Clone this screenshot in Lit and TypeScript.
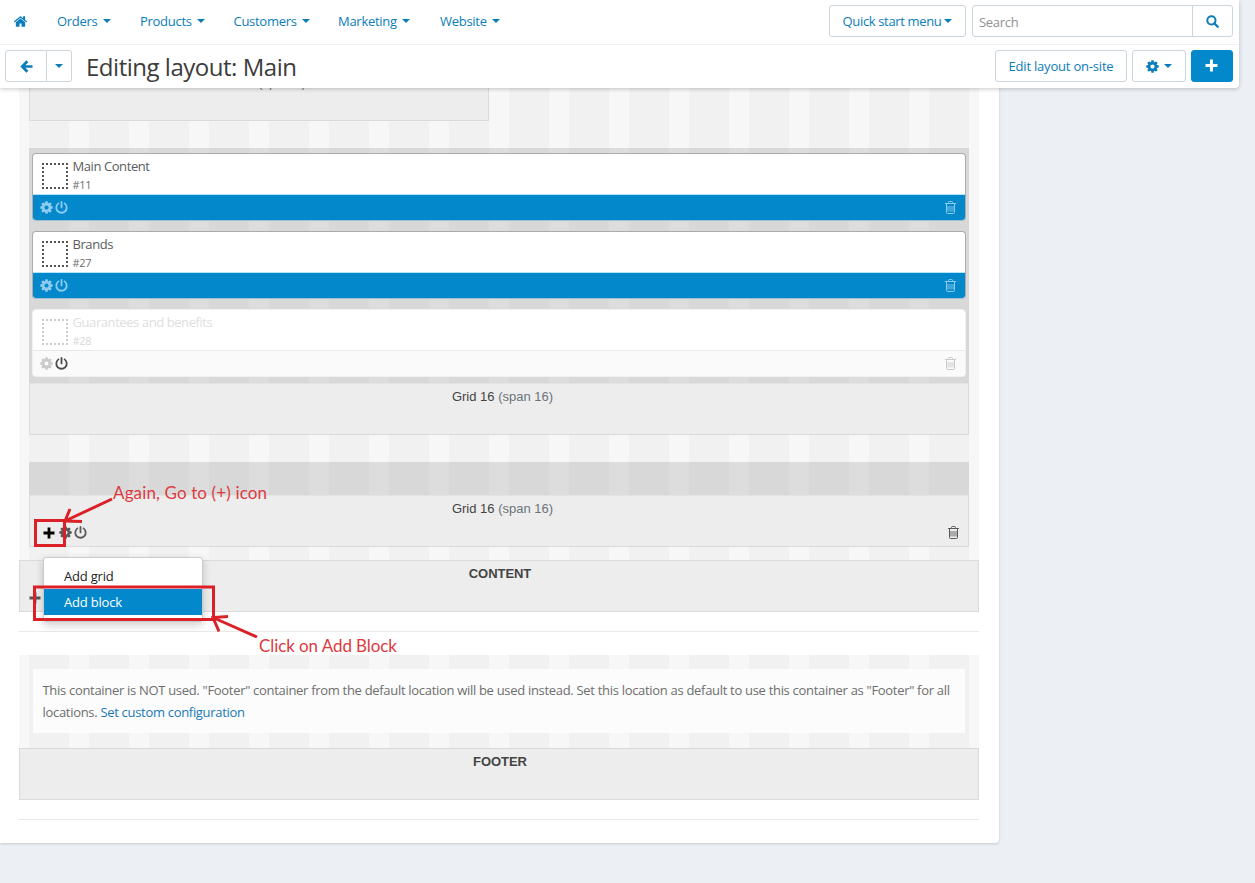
import { LitElement, html, svg, css } from "lit";
import { customElement, property } from "lit/decorators.js";

const ICONS: Record<string, string> = {
  home: "M1472 992v480q0 26-19 45t-45 19h-384v-384h-256v384h-384q-26 0-45-19t-19-45v-480q0-1 .5-3t.5-3l575-474 575 474q1 2 1 6zm223-69l-62 74q-8 9-21 11h-3q-13 0-21-7l-692-577-692 577q-12 8-24 7-13-2-21-11l-62-74q-8-10-7-23.5t11-21.5l719-599q32-26 76-26t76 26l244 204v-195q0-14 9-23t23-9h192q14 0 23 9t9 23v408l219 182q10 8 11 21.5t-7 23.5z",
  cog: "M1152 896q0-106-75-181t-181-75-181 75-75 181 75 181 181 75 181-75 75-181zm512-109v222q0 12-8 23t-20 13l-185 28q-19 54-39 91 35 50 107 138 10 12 10 25t-9 23q-27 37-99 108t-94 71q-12 0-26-9l-138-108q-44 23-91 38-16 136-29 186-7 28-36 28h-222q-14 0-24.5-8.5t-11.5-21.5l-28-184q-49-16-90-37l-141 107q-10 9-25 9-14 0-25-11-126-114-165-168-7-10-7-23 0-12 8-23 15-21 51-66.5t54-70.5q-27-50-41-99l-183-27q-13-2-21-12.5t-8-23.5v-222q0-12 8-23t19-13l186-28q14-46 39-92-40-57-107-138-10-12-10-24 0-10 9-23 26-36 98.5-107.5t94.5-71.5q13 0 26 10l138 107q44-23 91-38 16-136 29-186 7-28 36-28h222q14 0 24.5 8.5t11.5 21.5l28 184q49 16 90 37l142-107q9-9 24-9 13 0 25 10 129 119 165 170 7 8 7 22 0 12-8 23-15 21-51 66.5t-54 70.5q26 50 41 98l183 28q13 2 21 12.5t8 23.5z",
};

@customElement("ui-icon")
export class UiIcon extends LitElement {
  @property() name = "";
  static styles = css`
    :host { display: inline-flex; flex: none; width: 13px; height: 13px; }
    svg { width: 100%; height: 100%; display: block; }
  `;
  render() {
    switch (this.name) {
      case "power":
        return html`<svg viewBox="0 0 13 13" fill="none" stroke="currentColor" stroke-width="1.8" stroke-linecap="round"><path d="M3.4 2.4A5.2 5.2 0 1 0 9.6 2.4M6.5 .9v5.5"/></svg>`;
      case "plus":
        return html`<svg viewBox="0 0 12 12" fill="currentColor"><path d="M4.6.5h2.8v4.1h4.1v2.8H7.4v4.1H4.6V7.4H.5V4.6h4.1z"/></svg>`;
      case "arrow":
        return html`<svg viewBox="0 0 13 13" fill="none" stroke="currentColor" stroke-width="2.7"><path d="M7.4 1.2 2.2 6.5l5.2 5.3M2.5 6.5h10"/></svg>`;
      case "search":
        return html`<svg viewBox="0 0 13 13" fill="none" stroke="currentColor" stroke-width="2"><circle cx="5.4" cy="5.4" r="4.1"/><path d="m8.3 8.3 3.4 3.4" stroke-linecap="round" stroke-width="2.3"/></svg>`;
      case "trash":
        return html`<svg viewBox="0 0 13 13" fill="none" stroke="currentColor" stroke-width="1"><path d="M1 2.5h11M4.5 2.5v-1q0-1 1-1h2q1 0 1 1v1M2.5 3v8.5q0 1 1 1h6q1 0 1-1V3"/><path fill="currentColor" stroke="none" opacity=".45" d="M3 5h7v5.5H3z"/></svg>`;
      default:
        return html`<svg viewBox="90 90 1612 1612" fill="currentColor">${svg`<path d=${ICONS[this.name] ?? ""} />`}</svg>`;
    }
  }
}

@customElement("layout-block")
export class LayoutBlock extends LitElement {
  @property() heading = "";
  @property() code = "";
  @property({ type: Boolean, reflect: true }) disabled = false;
  static styles = css`
    :host { display: block; box-sizing: border-box; height: 68px; border: 1px solid #ababab; border-bottom-color: #9fbfd2; border-radius: 4px; background: #fff; overflow: hidden; font: 13px/18px "Open Sans", sans-serif; color: #5c5c5c; }
    .head { display: flex; height: 40px; padding: 0 0 0 9px; gap: 4.5px; border-bottom: 1px solid #b5e4fa; }
    .box { width: 26px; height: 26px; margin-top: 9px; color: #555; }
    .text { display: flex; flex-direction: column; padding-top: 3px; letter-spacing: -0.42px; }
    .code { font-size: 11px; line-height: 19px; letter-spacing: -0.3px; color: #6c6c6c; }
    .tools { display: flex; align-items: center; gap: 2px; height: 25px; padding: 0 8px 1px 7px; box-sizing: border-box; background: #0388cc; color: #8fcdf0; }
    .bin { margin-left: auto; }
    :host([disabled]) { border-color: #f0f0f0; color: #dedede; }
    :host([disabled]) .code { color: #d8d8d8; }
    :host([disabled]) .head { border-color: #e9e9e9; }
    :host([disabled]) .tools { background: #fafafa; color: #cacaca; }
    :host([disabled]) .power { color: #4c4c4c; }
    :host([disabled]) .box { color: #ccc; }
  `;
  render() {
    return html`
      <div class="head">
        <svg class="box" viewBox="0 0 26 26"><path d="M0 1h26M0 25h26M1 4v20M25 4v20" fill="none" stroke="currentColor" stroke-width="2" stroke-dasharray="2 2"/></svg>
        <div class="text"><span>${this.heading}</span><span class="code">${this.code}</span></div>
      </div>
      <div class="tools"><ui-icon name="cog"></ui-icon><ui-icon class="power" name="power"></ui-icon><ui-icon class="bin" name="trash"></ui-icon></div>
    `;
  }
}

@customElement("app-root")
export class AppRoot extends LitElement {
  static styles = css`
    :host { display: block; position: relative; box-sizing: border-box; width: 1255px; height: 883px; overflow: hidden; background: #ecf0f4; font: 13px/20px "Open Sans", sans-serif; color: #0b7dba; }
    * { box-sizing: border-box; }
    .top { position: relative; z-index: 2; width: 1239px; height: 88px; background: #fff; border-radius: 0 0 4px 0; box-shadow: 0 1px 4px rgba(0,0,0,.22); }
    .nav { display: flex; align-items: flex-start; height: 45px; border-bottom: 1px solid #f0f0f0; padding: 5px 6px 0 14px; }
    .home { margin: 10px 30px 0 0; }
    .link { display: flex; align-items: center; gap: 5px; height: 32px; letter-spacing: -0.28px; }
    .l1 { width: 83px; } .l2 { width: 93.5px; } .l3 { width: 104.5px; } .l4 { width: 102px; }
    .caret { width: 0; height: 0; border: 4px solid transparent; border-top-color: currentColor; border-bottom: 0; flex: none; }
    .btn { display: flex; align-items: center; justify-content: center; height: 32px; border: 1px solid #ccd5db; border-radius: 3px; background: #fff; white-space: nowrap; letter-spacing: -0.2px; }
    .quick { width: 137px; margin-left: auto; gap: 3px; letter-spacing: -0.35px; }
    .search { display: flex; width: 261px; height: 32px; margin-left: 6px; border: 1px solid #ccd5db; border-radius: 3px; }
    .field { flex: 1; padding: 6px 6px 0; color: #909090; letter-spacing: -0.3px; }
    .go { display: flex; align-items: center; justify-content: center; width: 40px; border-left: 1px solid #ccd5db; }
    .bar { display: flex; height: 43px; padding: 5px 6px 0 5px; }
    .back { width: 42px; border-radius: 3px 0 0 3px; }
    .more { width: 26px; margin-left: -1px; border-radius: 0 3px 3px 0; }
    h1 { margin: 1px auto 0 14px; font-size: 24px; line-height: 32px; font-weight: 400; color: #3c3c3c; letter-spacing: -0.48px; }
    .site { width: 132px; }
    .gear { width: 54px; margin-left: 5px; gap: 5px; }
    .add { width: 42px; margin-left: 5px; padding: 0 1px 1px 0; background: #0388cc; border-color: #0388cc; color: #fff; }
    .panel { width: 999px; height: 775px; margin-top: -20px; padding: 0 20px 0 19px; background: #fff; border-radius: 0 0 4px 0; box-shadow: 0 1px 3px rgba(0,0,0,.16); }
    .stripes { padding: 1px 10px 13px; background: repeating-linear-gradient(90deg, #f1f1f1 0 40px, #f7f7f7 40px 60px) 10px 0 / 940px 100% no-repeat #f7f7f7; }
    .tools { height: 52px; background: #ededed; border: 1px solid #dadada; padding-left: 7px; text-align: center; font: 13px/26px "Liberation Sans", sans-serif; color: #444; }
    .muted { color: #6b747b; }
    .grid .tools { border-top-color: #e4e4e4; }
    .half { width: 460px; margin-bottom: 27px; }
    .blocks { display: flex; flex-direction: column; gap: 10px; padding: 5px 3px 6px; background: rgba(0,0,0,.1); }
    .empty { height: 33px; background: rgba(0,0,0,.1); margin-top: 27px; }
    .actions { display: flex; align-items: center; gap: 2px; padding: 4px 8px 0 0; color: #5a5a5a; }
    .actions .plus { width: 12px; height: 12px; color: #000; margin: 0 2px 0 6px; }
    .bin { margin-left: auto; }
    .tools.wide { font-weight: 700; padding-left: 2px; letter-spacing: -0.05px; }
    .rule { height: 1px; background: #e9e9e9; margin: 19px 0 23px; }
    .foot { padding: 14px 14px 15px 14px; }
    .note { height: 64px; padding: 10px 9.5px; background: #fcfcfc; color: #6e6e6e; line-height: 22px; white-space: nowrap; letter-spacing: -0.306px; }
    .note a { color: #1878b8; }
    .ghost { position: absolute; left: 29px; top: 592px; color: #555; width: 12px; height: 12px; z-index: 2; }
    .menu { position: absolute; z-index: 3; left: 43px; top: 557px; width: 160px; height: 65px; padding-top: 6px; background: #fff; border: 1px solid #ccc; border-radius: 3px; box-shadow: 0 3px 8px rgba(0,0,0,.2); color: #222; }
    .item { height: 26px; line-height: 25px; padding-left: 20px; letter-spacing: -0.2px; }
    .item.on { margin-top: -1px; height: 26px; line-height: 27px; background: #0388cc; color: #fff; }
    .marks { position: absolute; z-index: 4; left: 0; top: 0; font: 17px Lato, sans-serif; }
  `;

  private link(label: string, cls: string) {
    return html`<div class="link ${cls}"><span>${label}</span><i class="caret"></i></div>`;
  }

  render() {
    return html`
      <header class="top">
        <nav class="nav">
          <ui-icon class="home" name="home"></ui-icon>
          ${this.link("Orders", "l1")}${this.link("Products", "l2")}${this.link("Customers", "l3")}${this.link("Marketing", "l4")}${this.link("Website", "l5")}
          <div class="btn quick"><span>Quick start menu</span><i class="caret"></i></div>
          <div class="search"><div class="field">Search</div><div class="go"><ui-icon name="search"></ui-icon></div></div>
        </nav>
        <div class="bar">
          <div class="btn back"><ui-icon name="arrow"></ui-icon></div>
          <div class="btn more"><i class="caret"></i></div>
          <h1>Editing layout: Main</h1>
          <div class="btn site"><span>Edit layout on-site</span></div>
          <div class="btn gear"><ui-icon name="cog"></ui-icon><i class="caret"></i></div>
          <div class="btn add"><ui-icon name="plus"></ui-icon></div>
        </div>
      </header>
      <main class="panel">
        <section class="stripes">
          <div class="grid half"><div class="tools">Grid 8 <span class="muted">(span 8)</span></div></div>
          <div class="grid">
            <div class="blocks">
              <layout-block heading="Main Content" code="#11"></layout-block>
              <layout-block heading="Brands" code="#27"></layout-block>
              <layout-block heading="Guarantees and benefits" code="#28" disabled></layout-block>
            </div>
            <div class="tools">Grid 16 <span class="muted">(span 16)</span></div>
          </div>
          <div class="grid">
            <div class="empty"></div>
            <div class="tools">Grid 16 <span class="muted">(span 16)</span>
              <div class="actions"><ui-icon class="plus" name="plus"></ui-icon><ui-icon name="cog"></ui-icon><ui-icon name="power"></ui-icon><ui-icon class="bin" name="trash"></ui-icon></div>
            </div>
          </div>
        </section>
        <div class="tools wide">CONTENT</div>
        <div class="rule"></div>
        <section class="stripes foot">
          <div class="note">This container is NOT used. "Footer" container from the default location will be used instead. Set this location as default to use this container as "Footer" for all<br>locations. <a>Set custom configuration</a></div>
        </section>
        <div class="tools wide">FOOTER</div>
        <div class="rule"></div>
      </main>
      <ui-icon class="ghost" name="plus"></ui-icon>
      <div class="menu"><div class="item">Add grid</div><div class="item on">Add block</div></div>
      <svg class="marks" width="1255" height="883" fill="none" stroke="#da2128" stroke-width="3">
        <rect x="35.5" y="520.5" width="29" height="25"/>
        <rect x="34.5" y="587" width="179" height="32.5"/>
        <path d="M112 499 65 521M70 509l-5 12 17 .5" />
        <path d="M257 637l-43-19M228 616.5l-15 1 6 14" />
        <text x="113" y="499" fill="#dd3a40" stroke="none" textLength="154">Again, Go to (+) icon</text>
        <text x="259" y="652" fill="#dd3a40" stroke="none" textLength="138">Click on Add Block</text>
      </svg>
    `;
  }
}
